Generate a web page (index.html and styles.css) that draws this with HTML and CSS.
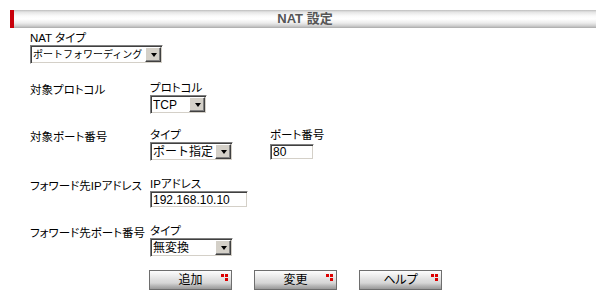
FILE: index.html
```html
<!doctype html>
<html lang="ja">
<head>
    <meta charset="utf-8">
    <title>NAT 設定</title>
    <link rel="stylesheet" href="styles.css">
</head>
<body>
    <div class="title_bar">NAT 設定</div>
    <form class="nat_form">
        <div class="cap">NAT タイプ</div>
        <span class="dd dd_nat"><select><option>ポートフォワーディング</option></select></span>

        <div class="row row_proto">
            <div class="label">対象プロトコル</div>
            <div class="field">
                <div class="cap">プロトコル</div>
                <span class="dd dd_tcp"><select><option>TCP</option></select></span>
            </div>
        </div>

        <div class="row row_port">
            <div class="label">対象ポート番号</div>
            <div class="field field_type">
                <div class="cap">タイプ</div>
                <span class="dd dd_type"><select><option>ポート指定</option></select></span>
            </div>
            <div class="field">
                <div class="cap">ポート番号</div>
                <input class="txt txt_port" type="text" value="80">
            </div>
        </div>

        <div class="row row_ip">
            <div class="label">フォワード先IPアドレス</div>
            <div class="field">
                <div class="cap">IPアドレス</div>
                <input class="txt txt_ip" type="text" value="192.168.10.10">
            </div>
        </div>

        <div class="row row_fwd">
            <div class="label">フォワード先ポート番号</div>
            <div class="field">
                <div class="cap">タイプ</div>
                <span class="dd dd_type"><select><option>無変換</option></select></span>
            </div>
        </div>

        <div class="buttons">
            <div class="btn">追加</div>
            <div class="btn">変更</div>
            <div class="btn">ヘルプ</div>
        </div>
    </form>
</body>
</html>
```

FILE: styles.css
```css
body{
    margin: 0;
    background: #fff;
    color: #000;
    font-family: "Liberation Sans", "Noto Sans CJK JP", sans-serif;
    font-size: 12px;
    font-feature-settings: "palt";
}
.title_bar{
    margin: 10px 8px 0 10px;
    height: 18px;
    box-sizing: border-box;
    border-left: 4px solid #c8000a;
    background: linear-gradient(#bdbdbd 0, #e4e4e4 2px, #fbfbfb 6px, #fff 9px, #ececec 13px, #cdcdcd 16px, #a9a9a9 18px);
    text-align: center;
    font-size: 13px;
    font-weight: bold;
    line-height: 18px;
    color: #555;
}
.nat_form{
    margin: 0;
    padding: 4px 0 0 30px;
}
.cap{
    height: 13px;
    line-height: 13px;
    font-size: 11.5px;
    white-space: nowrap;
}
.row{
    display: flex;
}
.row_proto{ margin-top: 18px; }
.row_port{ margin-top: 15px; }
.row_ip{ margin-top: 17px; }
.row_fwd{ margin-top: 17px; }
.label{
    flex: none;
    width: 120px;
    padding-top: 2px;
    line-height: 13px;
    font-size: 11.5px;
    white-space: nowrap;
}
.field_type{
    width: 120px;
}
/* windows classic dropdown */
.dd{
    position: relative;
    display: block;
    height: 19px;
}
.dd select{
    appearance: none;
    -webkit-appearance: none;
    display: block;
    width: 100%;
    height: 100%;
    margin: 0;
    padding: 0 0 0 2px;
    box-sizing: border-box;
    border: 1px solid;
    border-color: #808080 #fff #fff #808080;
    border-radius: 0;
    box-shadow: inset 1px 1px #404040, inset -1px -1px #d4d0c8;
    background: #fff;
    color: #000;
    font-family: "Liberation Sans", "Noto Sans CJK JP", sans-serif;
    font-size: 12px;
    outline: none;
}
.dd::after{
    content: "";
    position: absolute;
    top: 2px;
    right: 2px;
    width: 16px;
    height: 15px;
    box-sizing: border-box;
    border: 1px solid;
    border-color: #fff #404040 #404040 #fff;
    box-shadow: inset -1px -1px #808080;
    background: #d4d0c8;
}
.dd::before{
    content: "";
    position: absolute;
    z-index: 1;
    top: 8px;
    right: 6px;
    border-left: 3.5px solid transparent;
    border-right: 3.5px solid transparent;
    border-top: 4px solid #000;
}
.dd_nat{ width: 133px; }
.dd_nat select{ font-size: 10px; }
.dd_tcp{ width: 57px; }
.dd_type{ width: 83px; }
.txt{
    display: block;
    margin: 0;
    padding: 0 0 0 2px;
    box-sizing: border-box;
    border: 1px solid;
    border-color: #808080 #fff #fff #808080;
    box-shadow: inset 1px 1px #404040, inset -1px -1px #d4d0c8;
    background: #fff;
    font-family: "Liberation Sans", "Noto Sans CJK JP", sans-serif;
    font-size: 12px;
    outline: none;
}
.txt_port{
    width: 44px;
    height: 16px;
    margin-top: 2px;
}
.txt_ip{
    width: 98px;
    height: 17px;
}
.buttons{
    display: flex;
    gap: 22px;
    margin: 13px 0 0 119px;
}
.btn{
    position: relative;
    width: 83px;
    height: 20px;
    box-sizing: border-box;
    border: 1px solid #6e6e6e;
    background: linear-gradient(#fdfdfd 0, #ececec 5px, #dedede 9px, #d6d6d6 12px, #b5b5b5 15px, #8f8f8f 19px);
    text-align: center;
    line-height: 18px;
    font-size: 12px;
}
.btn::after{
    content: "";
    position: absolute;
    top: 3px;
    right: 3px;
    width: 7px;
    height: 7px;
    background:
        linear-gradient(#d00, #d00) 0 0 / 3px 3px no-repeat,
        linear-gradient(#d00, #d00) 4px 0 / 3px 3px no-repeat,
        linear-gradient(#d00, #d00) 4px 4px / 3px 3px no-repeat;
}
```
